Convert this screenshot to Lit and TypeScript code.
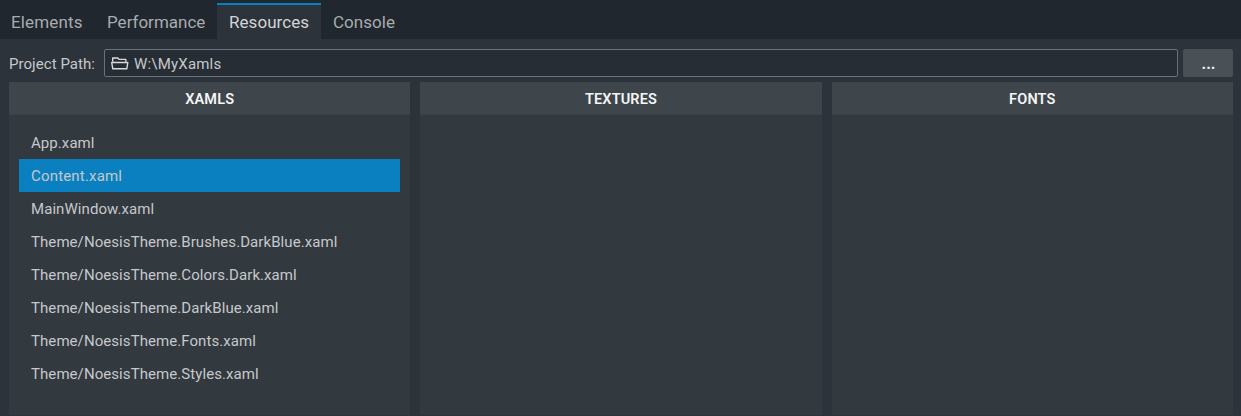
import { LitElement, html, css } from "lit";
import { customElement, state } from "lit/decorators.js";
import { classMap } from "lit/directives/class-map.js";

const TABS = ["Elements", "Performance", "Resources", "Console"];
const XAMLS = [
  "App.xaml",
  "Content.xaml",
  "MainWindow.xaml",
  "Theme/NoesisTheme.Brushes.DarkBlue.xaml",
  "Theme/NoesisTheme.Colors.Dark.xaml",
  "Theme/NoesisTheme.DarkBlue.xaml",
  "Theme/NoesisTheme.Fonts.xaml",
  "Theme/NoesisTheme.Styles.xaml",
];

@customElement("app-root")
export class AppRoot extends LitElement {
  static styles = css`
    :host {
      display: flex;
      flex-direction: column;
      box-sizing: border-box;
      height: 416px;
      background: #2c333a;
      color: #c6c8ca;
      font: 400 15px/20px Roboto, "Liberation Sans", sans-serif;
      overflow: hidden;
    }
    .tabs {
      display: flex;
      flex: none;
      height: 36px;
      padding-top: 3px;
      background: #20272e;
    }
    .tab {
      box-sizing: border-box;
      height: 36px;
      padding: 7px 11px 0 12px;
      border-top: 2px solid transparent;
      font-size: 17px;
      line-height: 20px;
      color: #a9acae;
      white-space: nowrap;
    }
    .tab.active {
      background: #2c333a;
      border-top-color: #0b80c1;
      color: #d3d5d6;
    }
    .elements { width: 95px; padding-left: 11px; letter-spacing: 0.15px; }
    .performance { width: 122px; letter-spacing: 0; }
    .resources { width: 104px; letter-spacing: 0.05px; }
    .console { letter-spacing: 0.05px; }
    .path {
      display: flex;
      flex: none;
      height: 28px;
      padding: 10px 8px 5px 9px;
    }
    .label {
      width: 95px;
      line-height: 30px;
      letter-spacing: 0.05px;
    }
    .field {
      box-sizing: border-box;
      display: flex;
      flex: 1;
      height: 28px;
      border: 1px solid #6b7178;
      border-radius: 2px;
      background: #262d34;
      line-height: 28px;
      padding-left: 6px;
    }
    .value { letter-spacing: 0.2px; }
    .folder {
      flex: none;
      width: 18px;
      height: 14px;
      margin: 6px 5px 0 0;
    }
    .browse {
      box-sizing: border-box;
      width: 50px;
      height: 28px;
      margin-left: 5px;
      padding: 0 0 0 1px;
      border: 1px solid #474e54;
      border-radius: 2px;
      background: #495056;
      color: #eceded;
      font: 700 16px/28px Roboto, sans-serif;
      text-align: center;
    }
    .columns {
      display: grid;
      flex: 1;
      grid-template-columns: repeat(3, 1fr);
      column-gap: 10px;
      padding: 0 8px 1px 9px;
    }
    .column { background: #32393f; }
    .heading {
      box-sizing: border-box;
      height: 33px;
      border-bottom: 1px solid #394046;
      background: #3e454b;
      color: #f4f5f5;
      font-size: 14.5px;
      font-weight: 600;
      letter-spacing: 0.15px;
      line-height: 35px;
      text-align: center;
    }
    .list { padding: 11px 10px 0; }
    .item {
      box-sizing: border-box;
      height: 33px;
      padding: 1px 0 0 12px;
      line-height: 33px;
      white-space: nowrap;
      letter-spacing: 0.07px;
      cursor: default;
    }
    .item.selected { background: #0b80c1; letter-spacing: 0.18px; }
  `;

  @state() private activeTab = "Resources";
  @state() private selected = "Content.xaml";

  render() {
    return html`
      <nav class="tabs">
        ${TABS.map(
          (t) => html`<div
            class=${classMap({ tab: true, [t.toLowerCase()]: true, active: t === this.activeTab })}
            @click=${() => (this.activeTab = t)}
          >${t}</div>`
        )}
      </nav>
      <div class="path">
        <span class="label">Project Path:</span>
        <div class="field">
          <svg class="folder" viewBox="0 0 18 14" fill="none" stroke="#d9dbdc" stroke-width="1.4" stroke-linejoin="round">
            <path d="M1.7 5.7V2H6.8L8.2 3.4H14.8V5.7" />
            <path d="M.7 6.5H16.8L15.8 12.8H1.8Z" />
          </svg>
          <span class="value">W:\\MyXamls</span>
        </div>
        <button class="browse">...</button>
      </div>
      <main class="columns">
        <section class="column">
          <div class="heading">XAMLS</div>
          <div class="list">
            ${XAMLS.map(
              (x) => html`<div
                class=${classMap({ item: true, selected: x === this.selected })}
                @click=${() => (this.selected = x)}
              >${x}</div>`
            )}
          </div>
        </section>
        <section class="column"><div class="heading">TEXTURES</div></section>
        <section class="column"><div class="heading">FONTS</div></section>
      </main>
    `;
  }
}
